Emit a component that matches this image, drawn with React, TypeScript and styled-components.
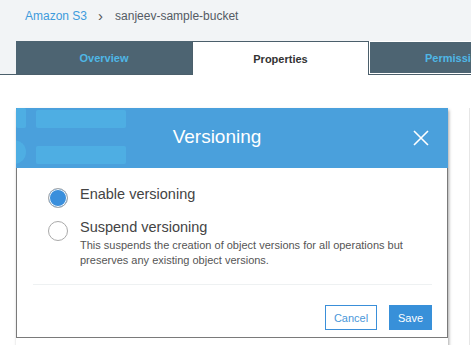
import React from 'react';
import styled, { createGlobalStyle } from 'styled-components';

const GlobalStyle = createGlobalStyle`
  html, body {
    margin: 0;
    padding: 0;
    background: #ffffff;
    font-family: "Liberation Sans", Arial, sans-serif;
  }
  * { box-sizing: border-box; }
`;

type TabProps = { $active?: boolean; $width: number };

const tabs = [
  { label: 'Overview', width: 176 },
  { label: 'Properties', width: 177, active: true },
  { label: 'Permissions', width: 118 },
];

const App: React.FC = () => {
  return (
    <Page>
      <GlobalStyle />
      <TopBar>
        <Breadcrumb>
          <Crumb href="#">Amazon S3</Crumb>
          <Chevron>›</Chevron>
          <Current>sanjeev-sample-bucket</Current>
        </Breadcrumb>
        <Tabs>
          {tabs.map((t) => (
            <Tab key={t.label} $active={t.active} $width={t.width}>
              {t.label}
            </Tab>
          ))}
        </Tabs>
      </TopBar>

      <Content>
        <Modal>
          <Header>
            <Decor width="112" height="60" viewBox="0 0 112 60">
              <rect x="0" y="0" width="10" height="20" rx="2" fill="#4eaee3" />
              <circle cx="-2" cy="44" r="12" fill="#4eaee3" />
              <rect x="20" y="2" width="90" height="18" rx="2" fill="#4eaee3" />
              <rect x="20" y="38" width="90" height="18" rx="2" fill="#4eaee3" />
            </Decor>
            <Title>Versioning</Title>
            <CloseButton aria-label="Close">
              <svg width="16" height="16" viewBox="0 0 16 16">
                <path d="M1 1 L15 15 M15 1 L1 15" stroke="#ffffff" strokeWidth="1.6" fill="none" />
              </svg>
            </CloseButton>
          </Header>
          <Body>
            <Option>
              <Radio $checked />
              <OptionText>
                <OptionLabel>Enable versioning</OptionLabel>
              </OptionText>
            </Option>
            <Option>
              <Radio />
              <OptionText>
                <OptionLabel>Suspend versioning</OptionLabel>
                <Description>
                  This suspends the creation of object versions for all operations but
                  <br />
                  preserves any existing object versions.
                </Description>
              </OptionText>
            </Option>
            <Divider />
            <Footer>
              <CancelButton>Cancel</CancelButton>
              <SaveButton>Save</SaveButton>
            </Footer>
          </Body>
        </Modal>
        <Aside />
      </Content>
    </Page>
  );
};

const Page = styled.div`
  width: 471px;
  height: 345px;
  overflow: hidden;
  background: #ffffff;
`;

const TopBar = styled.div`
  background: #f2f4f6;
  border-bottom: 1px solid #4b5f6b;
`;

const Breadcrumb = styled.div`
  display: flex;
  align-items: center;
  height: 41px;
  padding: 0 0 10px 25px;
  font-size: 12px;
`;

const Crumb = styled.a`
  color: #3d9bdc;
  text-decoration: none;
`;

const Chevron = styled.span`
  color: #555555;
  font-size: 15px;
  margin: 0 12px 0 11px;
`;

const Current = styled.span`
  color: #545b64;
`;

const Tabs = styled.div`
  display: flex;
  padding-left: 16px;
  height: 33px;
`;

const Tab = styled.div<TabProps>`
  flex: 0 0 ${(p) => p.$width}px;
  display: flex;
  align-items: center;
  justify-content: ${(p) => (p.$width < 150 ? 'flex-start' : 'center')};
  padding-left: ${(p) => (p.$width < 150 ? '55px' : '0')};
  font-size: 11px;
  font-weight: bold;
  color: ${(p) => (p.$active ? '#333333' : '#4fb7e6')};
  background: ${(p) => (p.$active ? '#ffffff' : '#4d6472')};
  border: 1px solid ${(p) => (p.$active ? '#4b5f6b' : '#ffffff')};
  border-bottom: ${(p) => (p.$active ? 'none' : '1px solid #ffffff')};
  margin-bottom: ${(p) => (p.$active ? '-1px' : '0')};
  white-space: nowrap;
  overflow: hidden;

  &:first-child {
    border-color: #4d6472;
  }
`;

const Content = styled.div`
  display: flex;
  padding: 33px 0 0 16px;
`;

const Modal = styled.div`
  width: 432px;
  flex: 0 0 432px;
  background: #ffffff;
  box-shadow: 1px 2px 3px rgba(0, 0, 0, 0.35);
`;

const Header = styled.div`
  position: relative;
  height: 60px;
  background: #4aa0dc;
  display: flex;
  align-items: center;
  justify-content: center;
  padding-right: 30px;
  overflow: hidden;
`;

const Decor = styled.svg`
  position: absolute;
  left: 0;
  top: 0;
`;

const Title = styled.h2`
  margin: 0 0 2px 0;
  font-size: 19px;
  font-weight: normal;
  color: #ffffff;
`;

const CloseButton = styled.button`
  position: absolute;
  right: 19px;
  top: 22px;
  background: none;
  border: none;
  padding: 0;
  width: 16px;
  height: 16px;
  display: flex;
  cursor: pointer;
`;

const Body = styled.div`
  border-left: 1px solid #7a7a7a;
  border-right: 1px solid #7a7a7a;
  border-bottom: 1px solid #7a7a7a;
  padding: 20px 15px 8px 16px;
  height: 170px;
`;

const Option = styled.div`
  display: flex;
  align-items: flex-start;
  padding-left: 15px;
  margin-bottom: 13px;
`;

const Radio = styled.span<{ $checked?: boolean }>`
  flex: 0 0 20px;
  width: 20px;
  height: 20px;
  border-radius: 50%;
  border: 1px solid #a9a9a9;
  background: ${(p) => (p.$checked ? '#3a8fdc' : '#ffffff')};
  box-shadow: ${(p) => (p.$checked ? 'inset 0 0 0 1px #ffffff' : 'none')};
`;

const OptionText = styled.div`
  margin-left: 12px;
  margin-top: -3px;
`;

const OptionLabel = styled.div`
  font-size: 14.5px;
  color: #444444;
  line-height: 18px;
`;

const Description = styled.div`
  margin-top: 2px;
  font-size: 11px;
  line-height: 15px;
  color: #555555;
`;

const Divider = styled.div`
  height: 1px;
  background: #eef1f2;
  margin-top: 16px;
`;

const Footer = styled.div`
  display: flex;
  justify-content: flex-end;
  gap: 12px;
  padding-top: 20px;
`;

const CancelButton = styled.button`
  height: 25px;
  width: 52px;
  font-family: inherit;
  font-size: 11px;
  color: #4a97d9;
  background: #ffffff;
  border: 1px solid #3a8fd9;
  padding: 0;
`;

const SaveButton = styled.button`
  height: 25px;
  width: 43px;
  font-family: inherit;
  font-size: 11px;
  color: #ffffff;
  background: #3890d9;
  border: none;
  padding: 0;
`;

const Aside = styled.div`
  margin-left: 21px;
  width: 2px;
  height: 240px;
  border-left: 1px solid #e6e6e6;
`;

export default App;
